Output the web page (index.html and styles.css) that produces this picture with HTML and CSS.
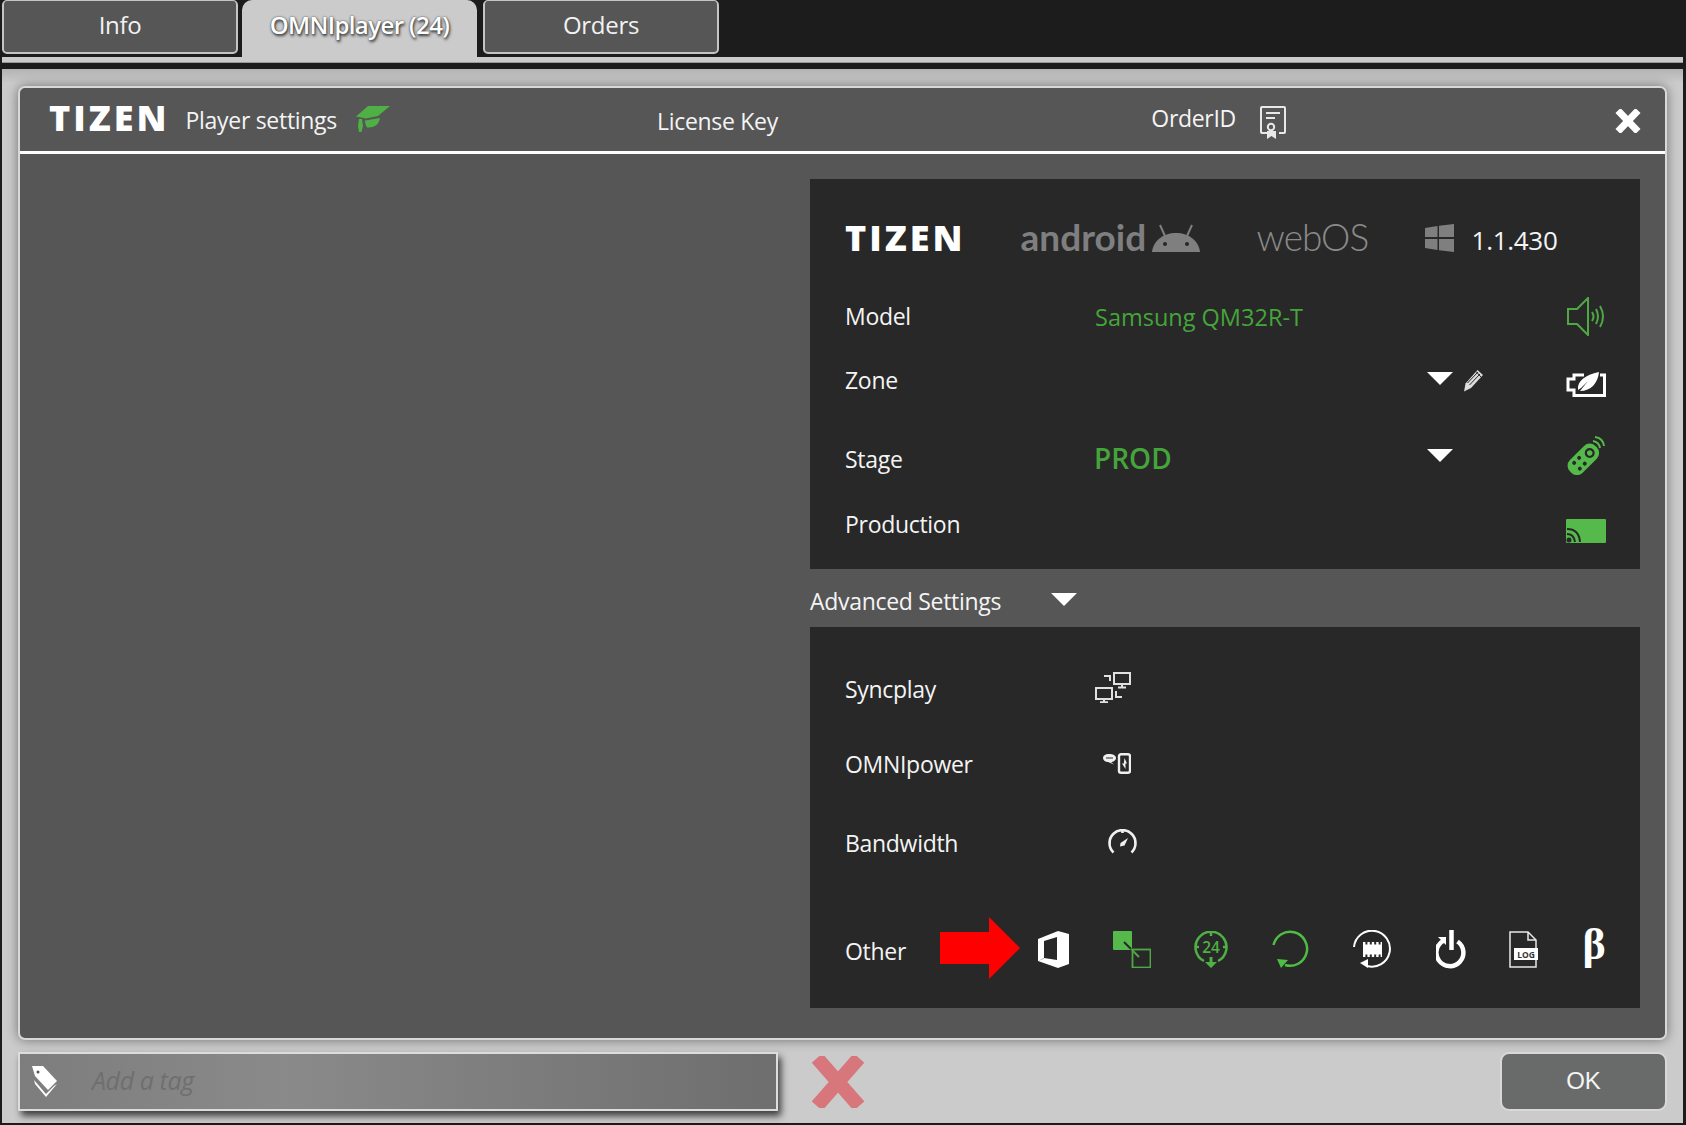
FILE: index.html
```html
<!DOCTYPE html>
<html lang="en">
<head>
<meta charset="utf-8">
<title>Player settings</title>
<link rel="stylesheet" href="styles.css">
</head>
<body>
<div class="app">
  <nav class="tabs">
    <div class="tab">Info</div>
    <div class="tab tab-active">OMNIplayer (24)</div>
    <div class="tab">Orders</div>
  </nav>
  <div class="strip"></div>
  <main class="main">
    <section class="dialog">
      <header class="dlg-head">
        <span class="tizen">TIZEN</span>
        <span class="head-title">Player settings</span>
        <svg class="i-cap" width="34" height="26" viewBox="0 0 34 26"><path fill="#4fb045" d="M12 0H34L22 10 10 12.500 0 10.500Z"/><path fill="#4fb045" d="M9 14.500 24 12C23 18 19 22 11 21.500 9.500 19 9 17 9 14.500Z"/><path fill="#4fb045" d="M3 13 6 13 7 20 5.500 26 3 26 2 20Z"/></svg>
        <span class="head-license">License Key</span>
        <span class="head-order">OrderID</span>
        <svg class="i-cert" width="26" height="33" viewBox="0 0 26 33" fill="none" stroke="#e8e8e8"><path stroke-width="2" d="M8 27H2Q1 27 1 26V2Q1 1 2 1H24Q25 1 25 2V26Q25 27 24 27H19"/><path stroke-width="2" d="M6 7H20M6 12H15"/><circle cx="11" cy="21" r="3.200" stroke-width="2"/><path fill="#e8e8e8" stroke="none" d="M7 25H16V33L11.500 30 7 33Z"/></svg>
        <svg class="i-close" width="26" height="24" viewBox="0 0 26 24"><path stroke="#fff" stroke-width="7" d="M3 1.500 23 22.500M23 1.500 3 22.500"/></svg>
      </header>
      <div class="dlg-body">
        <div class="col">
          <section class="panel panel-main">
            <div class="brands">
              <span class="tizen">TIZEN</span>
              <span class="android">android</span>
              <svg class="i-droid" width="48" height="28" viewBox="0 0 48 28"><path fill="#7f7f7f" d="M0 28C1 17 11 9 24 9S47 17 48 28Z"/><path stroke="#7f7f7f" stroke-width="2" d="M13 12 8 1M35 12 40 1"/><circle cx="13" cy="20" r="2" fill="#282828"/><circle cx="35" cy="20" r="2" fill="#282828"/></svg>
              <span class="webos">webOS</span>
              <svg class="i-win" width="29" height="28" viewBox="0 0 29 28"><path fill="#7f7f7f" d="M0 4 12.500 2V13H0ZM14 1.700 29 0V13H14ZM0 15H12.500V26L0 24ZM14 15H29V28L14 26.300Z"/></svg>
              <span class="version">1.1.430</span>
            </div>
            <div class="row row-model">
              <span class="lbl">Model</span>
              <span class="val-green">Samsung QM32R-T</span>
              <svg class="i-side" width="38" height="39" viewBox="0 0 38 39" fill="none" stroke="#4fa843" stroke-width="2"><path d="M1 12H10L21 1V38L10 27H1Z"/><path d="M25 15Q28 19.500 25 24M29 12Q33 19.500 29 27M33 9Q39 19.500 33 30"/></svg>
            </div>
            <div class="row row-zone">
              <span class="lbl">Zone</span>
              <span class="pick">
                <i class="tri"></i>
                <svg class="i-pencil" width="21" height="23" viewBox="0 0 21 23" fill="#ddd"><path d="M14.500 1 20 6 8 19 1 22.500 2.500 14.500Z"/><path stroke="#282828" stroke-width="1" d="M4.500 14 15 3M6.500 16 17 5M13 2.500 18 8"/></svg>
              </span>
              <svg class="i-side" width="40" height="26" viewBox="0 0 40 26"><path fill="none" stroke="#fff" stroke-width="3" d="M18 4H8V8H2V19H8V24.500H38.500V4H34"/><path fill="#fff" d="M12 19C11 10 19 4 33 1 32 12 25 20 14 20L22 10 15 17Z"/></svg>
            </div>
            <div class="row row-stage">
              <span class="lbl">Stage</span>
              <span class="val-prod">PROD</span>
              <span class="pick"><i class="tri"></i></span>
              <svg class="i-side" width="39" height="39" viewBox="0 0 39 39"><g transform="rotate(-45 17 23)"><rect x="-1" y="14.500" width="36" height="18" rx="8" fill="#55b94b"/><circle cx="26" cy="23.500" r="5" fill="#282828"/><circle cx="26" cy="23.500" r="2.700" fill="#55b94b"/><circle cx="15" cy="19.500" r="2" fill="#282828"/><circle cx="15" cy="27.500" r="2" fill="#282828"/><circle cx="8" cy="19.500" r="2" fill="#282828"/><circle cx="8" cy="27.500" r="2" fill="#282828"/></g><path fill="none" stroke="#55b94b" stroke-width="2" d="M27 5Q33 6 34 12M29 1Q37 2 38 10"/></svg>
            </div>
            <div class="row row-prodn">
              <span class="lbl">Production</span>
              <svg class="i-side" width="40" height="24" viewBox="0 0 40 24"><rect width="40" height="24" rx="1" fill="#55b94b"/><circle cx="3" cy="21" r="2.500" fill="#282828"/><path fill="none" stroke="#282828" stroke-width="2" d="M1 15Q8 15 9 23M1 10Q13 10 14 23"/></svg>
            </div>
          </section>
          <div class="adv">
            <span class="adv-label">Advanced Settings</span>
            <i class="tri"></i>
          </div>
          <section class="panel panel-adv">
            <div class="row row-sync">
              <span class="lbl">Syncplay</span>
              <svg class="i-sync" width="36" height="31" viewBox="0 0 36 31" fill="none" stroke="#e0e0e0" stroke-width="2"><rect x="19" y="1" width="16" height="11"/><rect x="1" y="16" width="16" height="11"/><path d="M27 12V15M23 15.500H31M9 27V30M5 30.300H13M15 9V4H9M21 19V25H27"/></svg>
            </div>
            <div class="row row-omni">
              <span class="lbl">OMNIpower</span>
              <svg class="i-omni" width="28" height="21" viewBox="0 0 28 21" fill="none" stroke="#f0f0f0" stroke-width="2.400"><rect x="16" y="1.200" width="11" height="18.600" rx="2"/><path fill="#f0f0f0" stroke="none" d="M21.500 5 24 10.500H22.500V16L19 10.500H20.800Z"/><path fill="#f0f0f0" stroke="none" d="M6 1C10 1 13 2.500 13 5S10 9 8 9L11 11.500 5 9C2 9 0 7 0 5S2 1 6 1Z"/><path stroke="#282828" stroke-width="1" d="M3 5H10"/></svg>
            </div>
            <div class="row row-band">
              <span class="lbl">Bandwidth</span>
              <svg class="i-band" width="29" height="25" viewBox="0 0 29 25" fill="none" stroke="#f0f0f0" stroke-width="2.600"><path d="M5.500 23.500A13 13 0 1 1 23.500 23.500"/><path d="M14.500 1V4M3 13H1M26 13H28"/><path fill="#f0f0f0" stroke="none" d="M20 9 16.500 16.500 12 17.500 12.500 14Z"/></svg>
            </div>
            <div class="other">
              <span class="lbl">Other</span>
              <svg class="i-arrow" width="80" height="62" viewBox="0 0 80 62"><path fill="#f00" d="M0 15H49V0L80 31 49 62V47H0Z"/></svg>
              <svg class="i-o" width="31" height="37" viewBox="0 0 31 37"><path fill="#fff" fill-rule="evenodd" d="M0 8 20 0 31 3V33L20 37 0 30ZM6 10V27L19 29 19 6Z"/><path fill="#bbb" d="M0 30 6 26.500 6 28Z"/></svg>
              <svg class="i-o" width="38" height="37" viewBox="0 0 38 37"><rect width="19" height="19" rx="1" fill="#55b94b"/><rect x="19.500" y="18.500" width="18" height="18" fill="none" stroke="#4fa843" stroke-width="1.800"/><path stroke="#282828" stroke-width="2" d="M11 11 18 18"/><path stroke="#4fa843" stroke-width="2" d="M19 19 26 26"/></svg>
              <svg class="i-o" width="34" height="37" viewBox="0 0 34 37" fill="none" stroke="#4fb045" stroke-width="2.500"><path d="M10 30A15.500 15.500 0 1 1 24 30"/><path d="M17 0V5M1 16H5M33 16H29"/><path fill="#4fb045" stroke="none" d="M15.500 26H18.500V31H23L17 37 11 31H15.500Z"/><text class="t24" x="17" y="22" text-anchor="middle">24</text></svg>
              <svg class="i-o" width="38" height="38" viewBox="0 0 38 38" fill="none" stroke="#4fbd45" stroke-width="2.500"><path d="M1.500 15A17 17 0 1 1 13 35"/><path fill="#4fbd45" stroke="none" d="M5 29 16 30 9 38Z"/></svg>
              <svg class="i-o" width="39" height="39" viewBox="0 0 39 39" fill="none" stroke="#fff" stroke-width="2"><path d="M1 17A18 18 0 1 1 14 36"/><path fill="#fff" stroke="none" d="M7 33 15 29 15 38Z"/><rect x="10" y="14.500" width="19" height="10" fill="#fff" stroke="none"/><path stroke="#fff" stroke-width="3" stroke-dasharray="2.400 2" d="M10 13.500H29M10 25.500H29"/></svg>
              <svg class="i-o" width="31" height="39" viewBox="0 0 31 39" fill="none" stroke="#fff" stroke-width="4.500"><path d="M15.500 0V20"/><path d="M21.500 11.500A13.500 13.500 0 1 1 8 10.500"/><path fill="#fff" stroke="none" d="M2 7H10V15Z"/></svg>
              <svg class="i-o" width="29" height="37" viewBox="0 0 29 37" fill="none"><path stroke="#e8e8e8" stroke-width="1.500" d="M1 36V1H19L27 9V36ZM19 1V9H27"/><rect x="5" y="17" width="24" height="12" fill="#fff"/><text class="tlog" x="17" y="26.500" text-anchor="middle">LOG</text></svg>
              <span class="beta">β</span>
            </div>
          </section>
        </div>
      </div>
    </section>
    <footer class="foot">
      <div class="tag">
        <svg class="i-tag" width="25" height="31" viewBox="0 0 25 31"><path fill="#fff" d="M0 0H11L25 15 16 24 3 10Z"/><circle cx="6" cy="6" r="1.500" fill="#555"/><path fill="#fff" d="M2 14 14 28 22 20 25 18 14 31 3 18Z"/></svg>
        <span class="tag-ph">Add a tag</span>
      </div>
      <svg class="i-x" width="52" height="52" viewBox="0 0 52 52"><path stroke="#d7777b" stroke-width="14" d="M5 2 47 50M47 2 5 50"/></svg>
      <div class="ok">OK</div>
    </footer>
  </main>
</div>
</body>
</html>
```
FILE: styles.css
```css
* { box-sizing: border-box; }
html, body { margin: 0; height: 100%; }
body {
  width: 1686px;
  height: 1125px;
  overflow: hidden;
  background: #1c1c1c;
  font-family: "Open Sans", sans-serif;
  color: #f4f4f4;
}
.app {
  height: 1125px;
  padding: 0 3px 2px 2px;
  display: flex;
  flex-direction: column;
}
.tabs { height: 57px; display: flex; gap: 4px; flex: none; }
.tab {
  width: 236px;
  height: 54px;
  background: #565656;
  border: 2px solid #c4c4c4;
  border-top-width: 1px;
  border-radius: 5px;
  display: flex;
  align-items: center;
  justify-content: center;
  padding-bottom: 5px;
  font-size: 24px;
  letter-spacing: -0.3px;
  color: #f2f2f2;
}
.tab-active {
  width: 235px;
  height: 57px;
  margin-right: 2px;
  padding-bottom: 9px;
  background: #cbcbcb;
  border: 0;
  border-radius: 10px 10px 0 0;
  font-weight: 600;
  letter-spacing: -0.6px;
  color: #fff;
  text-shadow: 1px 2px 3px #333, 0 0 2px #444;
}
.strip { height: 6px; background: #cbcbcb; border-bottom: 1px solid #999; flex: none; margin-bottom: 6px; }
.main {
  flex: 1;
  min-height: 0;
  background: linear-gradient(#b3b3b3, #cbcbcb 14px);
  padding: 17px 16px 0;
  display: flex;
  flex-direction: column;
}
.dialog {
  height: 954px;
  flex: none;
  background: #565656;
  border: 2px solid #d8d8d8;
  border-radius: 7px;
  box-shadow: 0 0 12px rgba(0, 0, 0, .45);
  display: flex;
  flex-direction: column;
}
.dlg-head {
  height: 66px;
  flex: none;
  border-bottom: 3px solid #fff;
  display: flex;
  align-items: center;
  padding-left: 29px;
  padding-right: 24px;
}
.tizen {
  font-weight: 800;
  font-size: 36px;
  line-height: 1;
  letter-spacing: 3px;
  color: #fff;
}
.dlg-head .tizen { margin-top: -4px; }
.head-title { font-size: 23px; letter-spacing: -0.3px; margin-left: 16px; }
.i-cap { margin-left: 19px; margin-top: -2px; }
.head-license { font-size: 23px; letter-spacing: -0.3px; margin-left: 267px; margin-top: 2px; }
.head-order { font-size: 23px; letter-spacing: -0.3px; margin-left: auto; margin-top: -3px; }
.i-cert { margin-left: 24px; margin-top: 6px; }
.i-close { margin-left: 329px; margin-top: 2px; }
.dlg-body {
  flex: 1;
  display: flex;
  justify-content: flex-end;
  padding: 25px 25px 0 0;
}
.col { width: 830px; display: flex; flex-direction: column; }
.panel { background: #282828; padding: 0 34px 0 35px; flex: none; }
.panel-main { height: 390px; padding-top: 28px; }
.panel-adv { height: 381px; padding-top: 30px; }
.brands { height: 62px; display: flex; align-items: center; }
.android { font-family: "Lato", sans-serif; font-weight: 700; font-size: 37px; color: #7f7f7f; margin-left: 55px; width: 131px; letter-spacing: 0; margin-top: -3px; }
.webos { font-family: "Lato", sans-serif; font-weight: 300; font-size: 37px; color: #8a8a8a; margin-left: 57px; width: 168px; letter-spacing: -1px; margin-top: -3px; }
.version { font-size: 26px; letter-spacing: -.3px; margin-left: 18px; margin-top: 4px; }
.row { display: grid; grid-template-columns: 250px 1fr 40px; align-items: center; }
.row-model { height: 60px; margin-top: 18px; }
.row-zone { height: 68px; }
.row-stage { height: 88px; grid-template-columns: 250px 332px 1fr 40px; }
.row-prodn { height: 44px; }
.row-sync { height: 64px; }
.row-omni { height: 86px; }
.row-band { height: 72px; }
.lbl { font-size: 23px; letter-spacing: -.3px; color: #f4f4f4; }
.row-model .lbl, .row-zone .lbl, .row-prodn .lbl { margin-top: -2px; }
.row-prodn .i-side { grid-column: 3; margin-top: 11px; }
.row-zone .pick { grid-column: 2; }
.row-zone .i-side { margin-top: 5px; }
.row-stage .i-side { margin-top: -7px; }
.val-green { font-size: 23.500px; color: #45a53b; }
.val-prod { font-weight: 600; font-size: 28px; color: #45a53b; margin-top: -2px; margin-left: -1px; }
.pick { display: flex; align-items: center; gap: 10px; padding-left: 332px; }
.row-stage .pick { padding-left: 0; }
.tri {
  width: 0;
  height: 0;
  display: block;
  border-left: 13px solid transparent;
  border-right: 13px solid transparent;
  border-top: 13px solid #fff;
}
.row-zone .tri { margin-top: -5px; }
.row-stage .tri { margin-top: -8px; }
.i-pencil { margin-top: -1px; }
.row-model .i-side { margin-left: 1px; margin-top: -1px; }
.adv { height: 58px; display: flex; align-items: center; flex: none; padding-top: 6px; }
.adv-label { font-size: 23px; letter-spacing: -.3px; width: 241px; }
.adv .tri { margin-top: -3px; }
.i-sync { margin-top: -3px; }
.i-omni { margin-left: 8px; margin-top: -1px; }
.i-band { margin-left: 13px; margin-top: -3px; }
.row-sync, .row-omni, .row-band { grid-template-columns: 250px 1fr; }
.other {
  display: grid;
  grid-template-columns: 95px 80px 66px 92px 66px 94px 69px 89px 55px 86px;
  justify-items: center;
  align-items: center;
  height: 62px;
  margin-top: 38px;
}
.other .lbl { justify-self: start; margin-top: 5px; }
.i-o { margin-top: 2px; }
.t24 { font: 600 15.500px "Open Sans", sans-serif; fill: #4fb045; stroke: none; }
.tlog { font: 700 8.500px "Open Sans", sans-serif; fill: #333; }
.beta { font-family: "Liberation Serif", serif; font-weight: 700; font-size: 44px; line-height: 1; color: #fff; margin-top: -6px; }
.foot {
  margin-top: 12px;
  height: 59px;
  display: flex;
  align-items: center;
  flex: none;
}
.tag {
  width: 760px;
  height: 59px;
  background: linear-gradient(90deg, #7d7d7d, #8a8a8a 35%, #6e6e6e);
  border: 2px solid #dcdcdc;
  box-shadow: 3px 5px 7px rgba(0, 0, 0, .7);
  display: flex;
  align-items: center;
  padding-left: 12px;
}
.tag-ph { font-size: 25px; font-style: italic; letter-spacing: -.4px; color: #6f6f6f; margin-left: 35px; margin-top: -4px; }
.i-x { margin-left: 34px; }
.ok {
  width: 167px;
  height: 59px;
  margin-left: auto;
  padding-bottom: 2px;
  background: #696b6a;
  border: 2px solid #d8d8d8;
  border-radius: 9px;
  display: flex;
  align-items: center;
  justify-content: center;
  font-family: "Liberation Sans", sans-serif;
  font-size: 24px;
  color: #f4f4f4;
}
```
